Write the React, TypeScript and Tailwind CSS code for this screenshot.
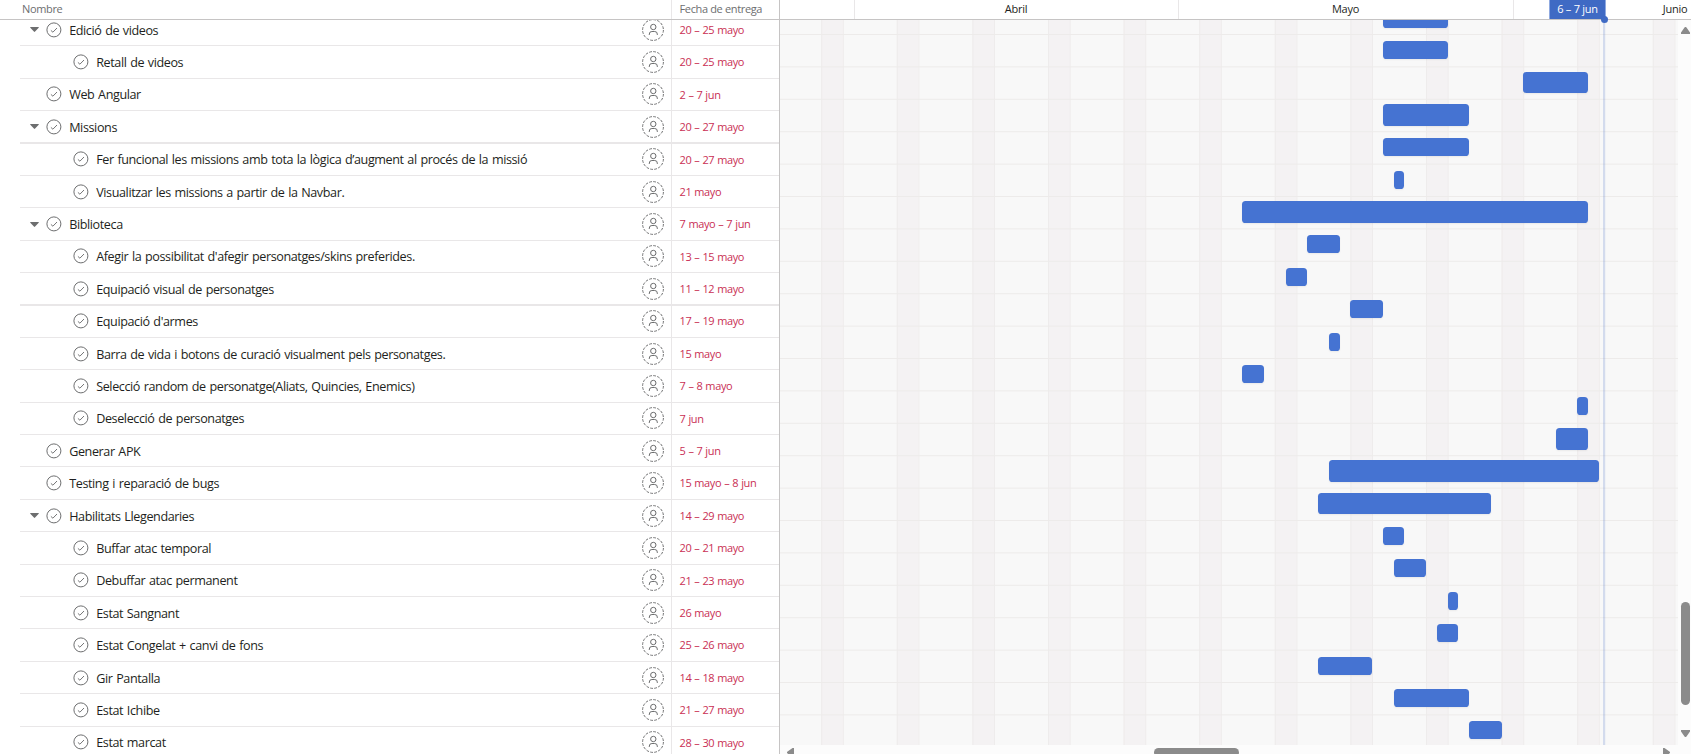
type Task = {
  name: string;
  due: string;
  start: number;
  end: number;
  level: 0 | 1;
  open?: boolean;
};

const DAY = 10.8;
const JUN = 31;

// start and end are day numbers counted from 1 May
const tasks: Task[] = [
  { name: "Edició de videos", due: "20 – 25 mayo", start: 20, end: 25, level: 0, open: true },
  { name: "Retall de videos", due: "20 – 25 mayo", start: 20, end: 25, level: 1 },
  { name: "Web Angular", due: "2 – 7 jun", start: JUN + 2, end: JUN + 7, level: 0 },
  { name: "Missions", due: "20 – 27 mayo", start: 20, end: 27, level: 0, open: true },
  { name: "Fer funcional les missions amb tota la lògica d’augment al procés de la missió", due: "20 – 27 mayo", start: 20, end: 27, level: 1 },
  { name: "Visualitzar les missions a partir de la Navbar.", due: "21 mayo", start: 21, end: 21, level: 1 },
  { name: "Biblioteca", due: "7 mayo – 7 jun", start: 7, end: JUN + 7, level: 0, open: true },
  { name: "Afegir la possibilitat d'afegir personatges/skins preferides.", due: "13 – 15 mayo", start: 13, end: 15, level: 1 },
  { name: "Equipació visual de personatges", due: "11 – 12 mayo", start: 11, end: 12, level: 1 },
  { name: "Equipació d'armes", due: "17 – 19 mayo", start: 17, end: 19, level: 1 },
  { name: "Barra de vida i botons de curació visualment pels personatges.", due: "15 mayo", start: 15, end: 15, level: 1 },
  { name: "Selecció random de personatge(Aliats, Quincies, Enemics)", due: "7 – 8 mayo", start: 7, end: 8, level: 1 },
  { name: "Deselecció de personatges", due: "7 jun", start: JUN + 7, end: JUN + 7, level: 1 },
  { name: "Generar APK", due: "5 – 7 jun", start: JUN + 5, end: JUN + 7, level: 0 },
  { name: "Testing i reparació de bugs", due: "15 mayo – 8 jun", start: 15, end: JUN + 8, level: 0 },
  { name: "Habilitats Llegendaries", due: "14 – 29 mayo", start: 14, end: 29, level: 0, open: true },
  { name: "Buffar atac temporal", due: "20 – 21 mayo", start: 20, end: 21, level: 1 },
  { name: "Debuffar atac permanent", due: "21 – 23 mayo", start: 21, end: 23, level: 1 },
  { name: "Estat Sangnant", due: "26 mayo", start: 26, end: 26, level: 1 },
  { name: "Estat Congelat + canvi de fons", due: "25 – 26 mayo", start: 25, end: 26, level: 1 },
  { name: "Gir Pantalla", due: "14 – 18 mayo", start: 14, end: 18, level: 1 },
  { name: "Estat Ichibe", due: "21 – 27 mayo", start: 21, end: 27, level: 1 },
  { name: "Estat marcat", due: "28 – 30 mayo", start: 28, end: 30, level: 1 },
];

const weekends = Array.from({ length: 12 }, (_, i) => 41.2 + i * 75.6);
const rowLines = Array.from({ length: 22 }, (_, i) => 14 + i * 32.4);

function CheckCircle() {
  return (
    <svg className="size-4 shrink-0" viewBox="0 0 16 16" fill="none" stroke="#6d6e6f">
      <circle cx="7.9" cy="7.9" r="7" strokeWidth="1" />
      <path d="M4.9 8.4 6.9 10.2 11 6" strokeWidth="0.95" />
    </svg>
  );
}

function Assignee() {
  return (
    <svg className="size-[22px] shrink-0" viewBox="0 0 22 22" fill="none" stroke="#6d6e6f">
      <circle cx="11" cy="11" r="10.4" strokeWidth="1" strokeDasharray="2.7 1.38" />
      <circle cx="11.3" cy="8" r="2.7" />
      <path d="M7.3 16v-.9a2.6 2.6 0 0 1 2.6-2.6h2.8a2.6 2.6 0 0 1 2.6 2.6v.9" />
    </svg>
  );
}

function TaskRow({ task, heavy }: { task: Task; heavy: boolean }) {
  return (
    <div className="flex h-[32.4px] shrink-0 flex-col pl-5">
      <div className={`shrink-0 bg-[#e9e7e8] ${heavy ? "-mt-px h-[2px]" : "h-px"}`} />
      <div className="flex min-h-0 flex-1">
        <div className={`flex flex-1 items-center ${task.level ? "pl-[53px]" : "pl-[26px]"}`}>
          {task.open && (
            <svg className="-ml-4 mr-[7px] h-[5px] w-[9px] shrink-0" viewBox="0 0 9 5" fill="#6d6e6f">
              <path d="M.6 0h7.8a.5.5 0 0 1 .3.8L5.1 4.6a.8.8 0 0 1-1.2 0L.3.8A.5.5 0 0 1 .6 0z" />
            </svg>
          )}
          <CheckCircle />
          <span className="ml-[7.2px] flex-1 whitespace-nowrap pt-[2px] text-[12.6px] leading-5 tracking-[-0.4px] text-[#1e1f21] [word-spacing:0.8px]">
            {task.name}
          </span>
          <div className="mr-[7px]">
            <Assignee />
          </div>
        </div>
        <div className="flex w-[108px] items-center border-l border-[#e9e7e8] pl-[7.5px] pt-px text-[11px] tracking-[-0.38px] text-[#c92f54] [word-spacing:0.5px]">
          {task.due}
        </div>
      </div>
    </div>
  );
}

export default function App() {
  return (
    <div className="flex h-[754px] w-[1691px] overflow-hidden bg-white font-['Open_Sans',sans-serif]">
      <section className="flex w-[779px] shrink-0 flex-col">
        <header className="flex h-5 shrink-0 border-b border-[#c6c4c4] text-[11px] tracking-[-0.35px] text-[#6d6e6f]">
          <div className="flex flex-1 items-center pl-[22px]">Nombre</div>
          <div className="flex w-[108px] items-center border-l border-[#e9e7e8] pl-[7.5px]">Fecha de entrega</div>
        </header>
        <div className="min-h-0 flex-1 overflow-hidden">
          <div className="-mt-[7px] flex flex-col">
            {tasks.map((t, i) => (
              <TaskRow key={t.name} task={t} heavy={i === 4 || i === 9} />
            ))}
          </div>
        </div>
      </section>

      <section className="flex min-w-0 flex-1 flex-col border-l border-[#c6c4c4]">
        <header className="relative flex h-5 shrink-0 border-b border-[#c6c4c4] text-[11px] tracking-[-0.25px] text-[#1e1f21]">
          <div className="w-[74px] shrink-0" />
          <div className="flex w-[324px] shrink-0 items-center justify-center border-l border-[#e9e7e8] pr-px">Abril</div>
          <div className="flex w-[335px] shrink-0 items-center justify-center border-l border-[#e9e7e8] pr-px">Mayo</div>
          <div className="flex w-[324px] shrink-0 items-center justify-center border-l border-[#e9e7e8] pr-px">Junio</div>
          <div className="absolute left-[769px] top-0 flex h-[19px] w-[57px] items-center justify-center border-x border-[#8fa9e0] bg-[#3f6ac4] text-white">
            6 – 7 jun
          </div>
          <div className="absolute left-[821px] top-4 z-10 size-[7px] rounded-full bg-[#3f6ac4]" />
        </header>
        <div className="flex h-[725px] shrink-0 bg-[#fcfcfc]">
          <div className="relative w-[898px] shrink-0 overflow-hidden bg-[#f8f8f8]">
            <svg className="absolute inset-0 h-full w-full">
              {weekends.map((x) => (
                <g key={x}>
                  <rect x={x} y="0" width="21.6" height="725" fill="#f4f2f3" />
                  <rect x={x} y="0" width="1" height="725" fill="#eeecec" />
                  <rect x={x + 21.6} y="0" width="1" height="725" fill="#eeecec" />
                </g>
              ))}
              {rowLines.map((y) => (
                <rect key={y} x="0" y={y} width="898" height="1" fill="#edebea" />
              ))}
              <rect x="823" y="0" width="2.2" height="725" fill="#3f6ac4" fillOpacity=".2" />
            </svg>
            <div className="relative -mt-[18.5px] flex flex-col">
              {tasks.map((t) => (
                <div key={t.name} className="flex h-[32.4px] shrink-0 items-center">
                  <div
                    className={`rounded-[3.6px] bg-[#4573d2] shadow-[0_1px_2px_rgba(0,0,0,0.06)] ${t.level ? "h-[18px]" : "h-[21.6px]"}`}
                    style={{ marginLeft: 602.8 + (t.start - 20) * DAY, width: (t.end - t.start + 1) * DAY }}
                  />
                </div>
              ))}
            </div>
          </div>
          <div className="flex flex-1 flex-col items-center pl-px pt-[7px]">
            <svg className="h-[7px] w-[9px]" viewBox="0 0 9 7" fill="#8b8b8b">
              <path d="M0 7V5.5L3.5.6a1.2 1.2 0 0 1 2 0L9 5.5V7z" />
            </svg>
            <div className="mt-[568px] h-[103px] w-[9px] rounded-full bg-[#8b8b8b]" />
            <svg className="mt-[25px] h-[7px] w-[9px]" viewBox="0 0 9 7" fill="#8b8b8b">
              <path d="M0 0V1.5L3.5 6.4a1.2 1.2 0 0 0 2 0L9 1.5V0z" />
            </svg>
          </div>
        </div>
        <div className="flex h-[9px] shrink-0 items-start bg-[#fcfcfc] pt-[3px]">
          <svg className="ml-[7px] h-[9px] w-[7px] shrink-0" viewBox="0 0 7 9" fill="#8b8b8b">
            <path d="M7 0H5.5L.6 3.5a1.2 1.2 0 0 0 0 2L5.5 9H7z" />
          </svg>
          <div className="ml-[360px] h-[9px] w-[85px] shrink-0 rounded-full bg-[#8b8b8b]" />
          <svg className="ml-[424px] h-[9px] w-[7px] shrink-0" viewBox="0 0 7 9" fill="#8b8b8b">
            <path d="M0 0h1.5L6.4 3.5a1.2 1.2 0 0 1 0 2L1.5 9H0z" />
          </svg>
        </div>
      </section>
    </div>
  );
}
